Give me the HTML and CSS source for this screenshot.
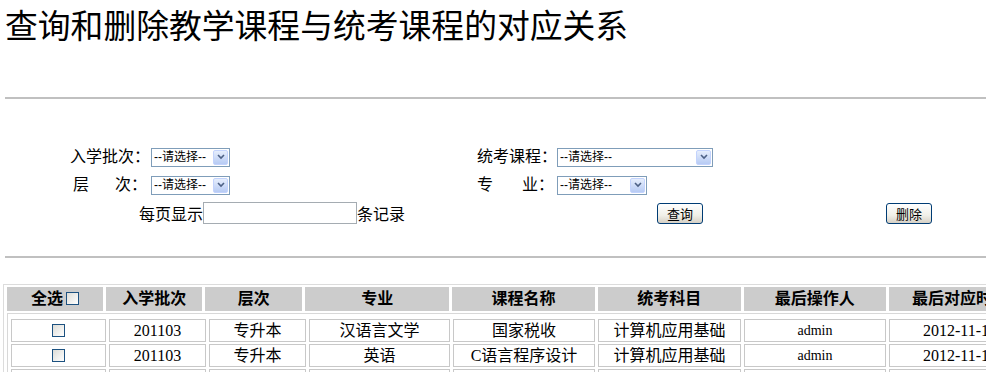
FILE: index.html
```html
<!DOCTYPE html>
<html lang="zh-CN">
  <head>
    <meta charset="UTF-8" />
    <title>查询和删除教学课程与统考课程的对应关系</title>
    <link rel="stylesheet" href="styles.css">
  </head>
  <body>
    <div class="page">
      <h1 class="page-title">查询和删除教学课程与统考课程的对应关系</h1>
      <hr class="rule rule--top">

      <form class="query">
        <div class="query-row">
          <label class="query-label">入学批次：</label>
          <span class="select select--short">
            <select><option>--请选择--</option></select>
            <span class="select-arrow"><svg viewBox="0 0 8 6" width="8" height="6"><path d="M1 1 L4 4 L7 1" fill="none" stroke="#4d6185" stroke-width="1.6"/></svg></span>
          </span>
          <label class="query-label">统考课程：</label>
          <span class="select select--wide">
            <select><option>--请选择--</option></select>
            <span class="select-arrow"><svg viewBox="0 0 8 6" width="8" height="6"><path d="M1 1 L4 4 L7 1" fill="none" stroke="#4d6185" stroke-width="1.6"/></svg></span>
          </span>
        </div>
        <div class="query-row">
          <label class="query-label query-label--inset">层<span class="gap gap--sm"></span>次：</label>
          <span class="select select--short">
            <select><option>--请选择--</option></select>
            <span class="select-arrow"><svg viewBox="0 0 8 6" width="8" height="6"><path d="M1 1 L4 4 L7 1" fill="none" stroke="#4d6185" stroke-width="1.6"/></svg></span>
          </span>
          <label class="query-label">专<span class="gap gap--lg"></span>业：</label>
          <span class="select select--mid">
            <select><option>--请选择--</option></select>
            <span class="select-arrow"><svg viewBox="0 0 8 6" width="8" height="6"><path d="M1 1 L4 4 L7 1" fill="none" stroke="#4d6185" stroke-width="1.6"/></svg></span>
          </span>
        </div>
        <div class="query-row query-row--actions">
          <span class="page-size">每页显示<input type="text" class="text-input">条记录</span>
          <button type="button" class="btn btn--search">查询</button>
          <button type="button" class="btn btn--delete">删除</button>
        </div>
      </form>

      <hr class="rule rule--bottom">

      <table class="grid">
        <colgroup>
          <col class="w-check"><col class="w-batch"><col class="w-level"><col class="w-major">
          <col class="w-course"><col class="w-exam"><col class="w-user"><col class="w-time">
        </colgroup>
        <thead>
          <tr>
            <th>全选<input type="checkbox" class="check check--head"></th>
            <th>入学批次</th>
            <th>层次</th>
            <th>专业</th>
            <th>课程名称</th>
            <th>统考科目</th>
            <th>最后操作人</th>
            <th>最后对应时间</th>
          </tr>
        </thead>
        <tbody>
          <tr>
            <td colspan="8" class="grid-body">
              <table class="grid-inner">
                <colgroup>
                  <col class="iw-check"><col class="iw-batch"><col class="iw-level"><col class="iw-major">
                  <col class="iw-course"><col class="iw-exam"><col class="iw-user"><col class="iw-time">
                </colgroup>
                <tr>
                  <td><input type="checkbox" class="check"></td>
                  <td>201103</td>
                  <td>专升本</td>
                  <td>汉语言文学</td>
                  <td>国家税收</td>
                  <td>计算机应用基础</td>
                  <td class="cell-user">admin</td>
                  <td>2012-11-14</td>
                </tr>
                <tr>
                  <td><input type="checkbox" class="check"></td>
                  <td>201103</td>
                  <td>专升本</td>
                  <td>英语</td>
                  <td>C语言程序设计</td>
                  <td>计算机应用基础</td>
                  <td class="cell-user">admin</td>
                  <td>2012-11-14</td>
                </tr>
                <tr>
                  <td><input type="checkbox" class="check"></td>
                  <td>201103</td>
                  <td>专升本</td>
                  <td>英语</td>
                  <td>国家税收</td>
                  <td>计算机应用基础</td>
                  <td class="cell-user">admin</td>
                  <td>2012-11-14</td>
                </tr>
              </table>
            </td>
          </tr>
        </tbody>
      </table>
    </div>
  </body>
</html>
```

FILE: styles.css
```css
html,
body {
  overflow: hidden;
}
body {
  margin: 0;
  background: #fff;
  color: #000;
  font-family: "Liberation Serif", "Noto Sans CJK SC", serif;
  font-size: 16px;
}
.page {
  padding-left: 5px;
}

.page-title {
  margin: 0;
  padding-top: 9px;
  height: 37px;
  line-height: 37px;
  font-size: 32.8px;
  font-weight: normal;
  white-space: nowrap;
}

.rule {
  height: 2px;
  margin: 0;
  border: 0;
  background: #c0c0c0;
}
.rule--top {
  margin-top: 51px;
}
.rule--bottom {
  margin-top: 29px;
}

/* query form */
.query {
  margin: 44px 0 0;
  padding-left: 65px;
}
.query-row {
  display: grid;
  grid-template-columns: 81px 326px 80px auto;
  align-items: center;
  justify-items: start;
  height: 28px;
}
.query-label {
  white-space: nowrap;
  line-height: 18px;
}
.query-label--inset {
  padding-left: 3px;
}
.gap {
  display: inline-block;
}
.gap--sm {
  width: 26px;
}
.gap--lg {
  width: 29px;
}

.select {
  display: inline-flex;
  box-sizing: border-box;
  height: 19px;
  padding: 1px;
  border: 1px solid #7f9db9;
  background: #fff;
}
.select--short {
  width: 79px;
}
.select--mid {
  width: 90px;
}
.select--wide {
  width: 156px;
}
.select select {
  flex: 1;
  min-width: 0;
  margin: 0;
  padding: 0 1px;
  border: 0;
  background: transparent;
  font-family: "Liberation Sans", "Noto Sans CJK SC", sans-serif;
  font-size: 12px;
  line-height: 15px;
  color: #000;
  appearance: none;
  -webkit-appearance: none;
  outline: none;
}
.select-arrow {
  display: flex;
  align-items: center;
  justify-content: center;
  box-sizing: border-box;
  width: 15px;
  border: 1px solid #c3d3fd;
  border-radius: 2px;
  background: linear-gradient(#e6eefc, #b7cbf4);
}

.query-row--actions {
  display: flex;
  align-items: center;
}
.page-size {
  display: flex;
  align-items: center;
  margin-left: 69px;
  white-space: nowrap;
}
.text-input {
  box-sizing: border-box;
  width: 154px;
  height: 22px;
  margin: 0;
  border: 1px solid #a5acb2;
  padding: 0 2px;
}
.btn {
  box-sizing: border-box;
  width: 46px;
  height: 21px;
  padding: 0;
  border: 1px solid #003c74;
  border-radius: 3px;
  background: linear-gradient(#ffffff, #f0efe8 60%, #d6d0c5);
  font-family: "Noto Sans CJK SC", sans-serif;
  font-size: 13px;
  line-height: 19px;
  color: #000;
}
.btn--search {
  margin-left: 252px;
}
.btn--delete {
  margin-left: 183px;
}

/* result grid */
.grid {
  margin-top: 26px;
  margin-left: -2px;
  border: 1px solid #dcdcdc;
  border-collapse: separate;
  border-spacing: 3px 2px;
  table-layout: fixed;
  width: 1032px;
}
.w-check { width: 96px; }
.w-batch { width: 96px; }
.w-level { width: 97px; }
.w-major { width: 144px; }
.w-course { width: 142px; }
.w-exam { width: 143px; }
.w-user { width: 142px; }
.w-time { width: 142px; }

.grid th {
  height: 24px;
  padding: 0;
  background: #cccccc;
  font-weight: bold;
  font-size: 16px;
  line-height: 20px;
  white-space: nowrap;
  overflow: hidden;
}
.grid-body {
  padding: 3px 0 0;
  border: 1px solid #d8d8d8;
}
.grid-inner {
  border-collapse: separate;
  border-spacing: 3px 2px;
  table-layout: fixed;
  width: 1026px;
}
.iw-check { width: 95px; }
.iw-batch { width: 97px; }
.iw-level { width: 97px; }
.iw-major { width: 141px; }
.iw-course { width: 142px; }
.iw-exam { width: 143px; }
.iw-user { width: 142px; }
.iw-time { width: 142px; }

.grid-inner td {
  box-sizing: border-box;
  height: 23px;
  padding: 0;
  border: 1px solid #c8c8c8;
  line-height: 19px;
  text-align: center;
  white-space: nowrap;
  overflow: hidden;
}
.cell-user {
  font-size: 14px;
}

.check {
  box-sizing: border-box;
  width: 13px;
  height: 13px;
  margin: 0;
  vertical-align: -1px;
  border: 1px solid #1c5180;
  background: linear-gradient(135deg, #dcdcd7, #ffffff);
  appearance: none;
  -webkit-appearance: none;
}
.check--head {
  margin-left: 3px;
}
```
